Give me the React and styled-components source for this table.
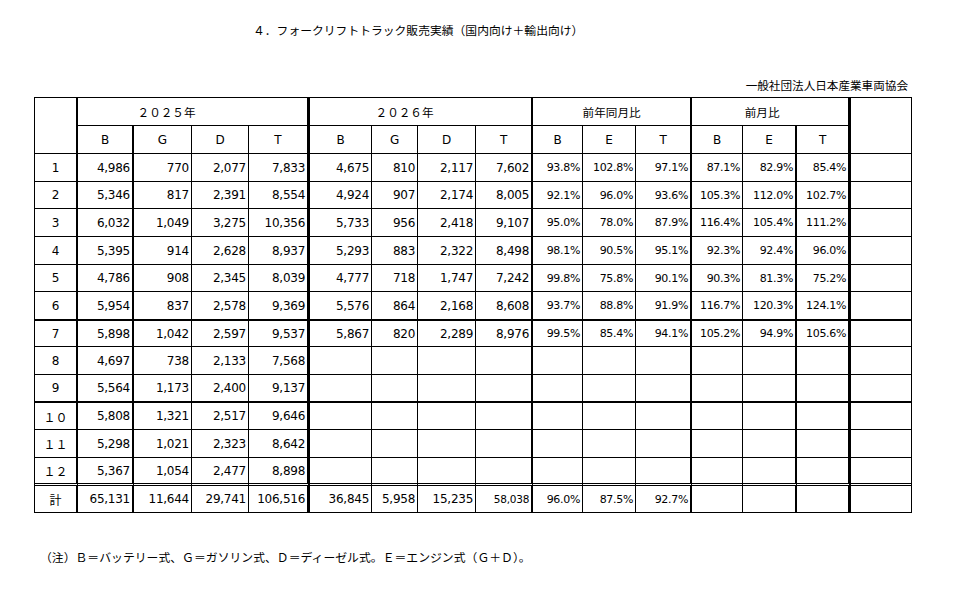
import React from 'react';
import styled, { createGlobalStyle } from 'styled-components';

const GlobalStyle = createGlobalStyle`
  html, body {
    margin: 0;
    background: #fff;
    color: #000;
    font-family: "DejaVu Sans", "Noto Sans CJK JP", sans-serif;
  }
`;

// border-box widths of every column, left to right
const colWidths = [43, 56, 58, 57, 61, 62, 46, 58, 57, 50, 53, 56, 51, 54, 54, 61];
// right border thickness where it is heavier than 1px
const heavyRight = { 0: 2, 1: 2, 4: 3, 8: 2, 11: 2, 13: 2, 14: 3 };

const rows = [
  { h: 28, cells: ['1', '4,986', '770', '2,077', '7,833', '4,675', '810', '2,117', '7,602', '93.8%', '102.8%', '97.1%', '87.1%', '82.9%', '85.4%'] },
  { h: 27, cells: ['2', '5,346', '817', '2,391', '8,554', '4,924', '907', '2,174', '8,005', '92.1%', '96.0%', '93.6%', '105.3%', '112.0%', '102.7%'] },
  { h: 28, cells: ['3', '6,032', '1,049', '3,275', '10,356', '5,733', '956', '2,418', '9,107', '95.0%', '78.0%', '87.9%', '116.4%', '105.4%', '111.2%'] },
  { h: 28, cells: ['4', '5,395', '914', '2,628', '8,937', '5,293', '883', '2,322', '8,498', '98.1%', '90.5%', '95.1%', '92.3%', '92.4%', '96.0%'] },
  { h: 27, cells: ['5', '4,786', '908', '2,345', '8,039', '4,777', '718', '1,747', '7,242', '99.8%', '75.8%', '90.1%', '90.3%', '81.3%', '75.2%'] },
  { h: 29, bottom: 'heavy', cells: ['6', '5,954', '837', '2,578', '9,369', '5,576', '864', '2,168', '8,608', '93.7%', '88.8%', '91.9%', '116.7%', '120.3%', '124.1%'] },
  { h: 26, cells: ['7', '5,898', '1,042', '2,597', '9,537', '5,867', '820', '2,289', '8,976', '99.5%', '85.4%', '94.1%', '105.2%', '94.9%', '105.6%'] },
  { h: 28, cells: ['8', '4,697', '738', '2,133', '7,568'] },
  { h: 28, bottom: 'heavy', cells: ['9', '5,564', '1,173', '2,400', '9,137'] },
  { h: 27, cells: ['１０', '5,808', '1,321', '2,517', '9,646'] },
  { h: 28, cells: ['１１', '5,298', '1,021', '2,323', '8,642'] },
  { h: 28, bottom: 'double', cells: ['１２', '5,367', '1,054', '2,477', '8,898'] },
  { h: 27, total: true, cells: ['計', '65,131', '11,644', '29,741', '106,516', '36,845', '5,958', '15,235', '58,038', '96.0%', '87.5%', '92.7%'] },
];

const App = () => {
  const renderRow = (row, ri) => (
    <Row key={ri} $h={row.h}>
      {colWidths.map((_, ci) => {
        const value = row.cells[ci] || '';
        if (ci === 0) {
          return (
            <LabelCell key={ci} $right={heavyRight[ci]} $bottom={row.bottom}>
              {value}
            </LabelCell>
          );
        }
        return (
          <NumCell
            key={ci}
            $right={heavyRight[ci]}
            $bottom={row.bottom}
            $pct={value.endsWith('%')}
            $small={row.total && ci === 8}
          >
            {value}
          </NumCell>
        );
      })}
    </Row>
  );

  return (
    <Page>
      <GlobalStyle />
      <Title>４．フォークリフトトラック販売実績（国内向け＋輸出向け）</Title>
      <Source>一般社団法人日本産業車両協会</Source>
      <Table>
        <colgroup>
          {colWidths.map((w, i) => (
            <col key={i} style={{ width: w }} />
          ))}
        </colgroup>
        <thead>
          <Row $h={28}>
            <HeadCell rowSpan={2} $right={2} />
            <HeadCell colSpan={4} $right={3} $cjk $shift={52}>２０２５年</HeadCell>
            <HeadCell colSpan={4} $right={2} $cjk $shift={32}>２０２６年</HeadCell>
            <HeadCell colSpan={3} $right={2} $cjk>前年同月比</HeadCell>
            <HeadCell colSpan={3} $right={3} $cjk $shift={16}>前月比</HeadCell>
            <HeadCell rowSpan={2} />
          </Row>
          <Row $h={28}>
            {['B', 'G', 'D', 'T', 'B', 'G', 'D', 'T', 'B', 'E', 'T', 'B', 'E', 'T'].map((l, i) => (
              <HeadCell key={i} $right={heavyRight[i + 1]}>{l}</HeadCell>
            ))}
          </Row>
        </thead>
        <tbody>{rows.map(renderRow)}</tbody>
      </Table>
      <Note>（注）Ｂ＝バッテリー式、Ｇ＝ガソリン式、Ｄ＝ディーゼル式。Ｅ＝エンジン式（Ｇ＋Ｄ）。</Note>
    </Page>
  );
};

export default App;

const Page = styled.div`
  width: 878px;
  padding: 22px 0 0 34px;
  display: flex;
  flex-direction: column;
`;

const Title = styled.div`
  padding-left: 219px;
  font-family: "Noto Sans CJK JP", sans-serif;
  font-size: 11.8px;
  line-height: 16px;
`;

const Source = styled.div`
  margin-top: 39px;
  padding-right: 4px;
  text-align: right;
  font-family: "Noto Sans CJK JP", sans-serif;
  font-size: 11.6px;
  line-height: 16px;
`;

const Table = styled.table`
  margin-top: 4px;
  table-layout: fixed;
  width: 878px;
  border-collapse: separate;
  border-spacing: 0;
  border-top: 1px solid #000;
  border-left: 1px solid #000;
`;

const Row = styled.tr`
  height: ${(p) => p.$h}px;
`;

const bottomBorder = (b) => {
  if (b === 'heavy') return '2px solid #000';
  if (b === 'double') return '3px double #000';
  return '1px solid #000';
};

const Cell = styled.td`
  box-sizing: border-box;
  padding: 0 2px 0 0;
  border-right: ${(p) => p.$right || 1}px solid #000;
  border-bottom: ${(p) => bottomBorder(p.$bottom)};
  font-size: 12px;
  white-space: nowrap;
  overflow: hidden;
`;

const HeadCell = styled(Cell).attrs({ as: 'th' })`
  padding: 0 ${(p) => p.$shift || 0}px 0 0;
  text-align: center;
  font-weight: normal;
  font-family: ${(p) => (p.$cjk ? '"Noto Sans CJK JP", sans-serif' : '"DejaVu Sans", sans-serif')};
  font-size: ${(p) => (p.$cjk ? '11.6px' : '12px')};
`;

const LabelCell = styled(Cell)`
  padding: 0;
  text-align: center;
  font-family: "DejaVu Sans", "Noto Sans CJK JP", sans-serif;
`;

const NumCell = styled(Cell)`
  text-align: right;
  letter-spacing: ${(p) => (p.$pct ? '-0.3px' : '-0.25px')};
  font-size: ${(p) => (p.$small ? '10.5px' : p.$pct ? '11px' : '12px')};
`;

const Note = styled.div`
  margin-top: 36px;
  padding-left: 6px;
  font-family: "Noto Sans CJK JP", sans-serif;
  font-size: 11.85px;
  line-height: 16px;
`;
